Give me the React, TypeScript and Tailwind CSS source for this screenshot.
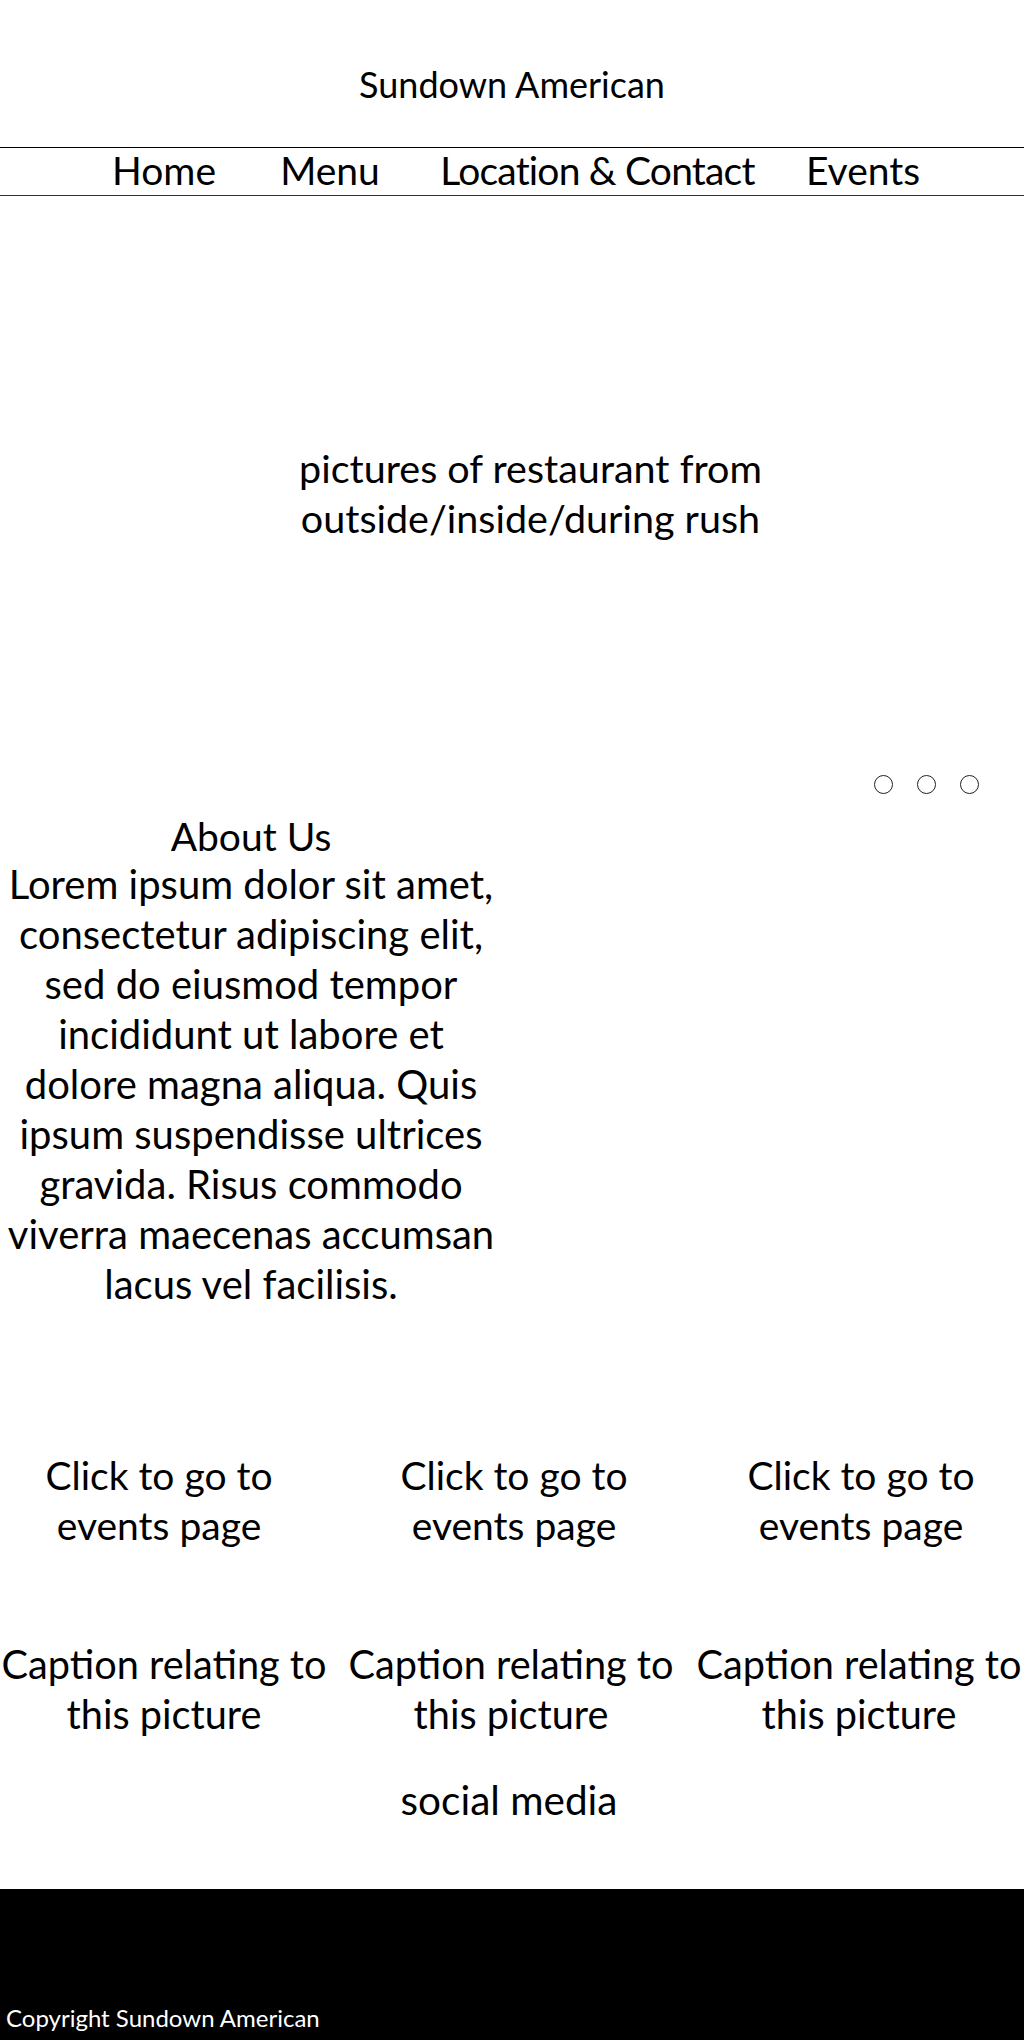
import React from "react";

const lorem = [
  "Lorem ipsum dolor sit amet,",
  "consectetur adipiscing elit,",
  "sed do eiusmod tempor",
  "incididunt ut labore et",
  "dolore magna aliqua. Quis",
  "ipsum suspendisse ultrices",
  "gravida. Risus commodo",
  "viverra maecenas accumsan",
  "lacus vel facilisis.",
];

export default function App() {
  return (
    <div className="w-[1024px] h-[2040px] bg-white text-black font-['Lato',sans-serif] flex flex-col">
      {/* Header */}
      <header className="pt-[59px]">
        <h1 className="text-center text-[36px] leading-[50px] font-normal whitespace-nowrap">
          Sundown American
        </h1>
      </header>

      {/* Nav */}
      <nav className="mt-[38px] border-t border-black border-b border-b-[#333] h-[49px]">
        <ul className="flex pl-[100px] text-[39px] leading-[44px] whitespace-nowrap">
          <li className="w-[128px] text-center">Home</li>
          <li className="w-[204px] text-center">Menu</li>
          <li className="w-[331px] text-center tracking-[-0.8px]">Location &amp; Contact</li>
          <li className="w-[200px] text-center">Events</li>
        </ul>
      </nav>

      {/* Hero */}
      <section className="pt-[247px] pl-[37px] text-center text-[39.5px] leading-[50px] whitespace-nowrap">
        <p>pictures of restaurant from</p>
        <p>outside/inside/during rush</p>
      </section>

      <div className="mt-[232px] flex justify-end gap-[24px] pr-[45px]">
        <span className="w-[19px] h-[19px] rounded-full border-[1.5px] border-[#222]" />
        <span className="w-[19px] h-[19px] rounded-full border-[1.5px] border-[#222]" />
        <span className="w-[19px] h-[19px] rounded-full border-[1.5px] border-[#222]" />
      </div>

      {/* About */}
      <section className="mt-[19px] w-[502px] text-center whitespace-nowrap">
        <h2 className="text-[39px] leading-[46px] font-normal">About Us</h2>
        <div className="text-[40px] leading-[50px]">
          {lorem.map((l) => (
            <p key={l}>{l}</p>
          ))}
        </div>
      </section>

      {/* Event links */}
      <section className="mt-[141px] grid grid-cols-[318px_392px_302px] text-center text-[39px] leading-[50px] whitespace-nowrap">
        {[0, 1, 2].map((i) => (
          <p key={i}>
            Click to go to
            <br />
            events page
          </p>
        ))}
      </section>

      {/* Captions */}
      <section className="mt-[89px] grid grid-cols-[328px_366px_330px] text-center text-[39.7px] leading-[50px] whitespace-nowrap">
        {[0, 1, 2].map((i) => (
          <p key={i}>
            Caption relating to
            <br />
            this picture
          </p>
        ))}
      </section>

      <p className="mt-[36px] pr-[6px] text-center text-[40.5px] leading-[50px]">social media</p>

      {/* Footer */}
      <footer className="mt-auto h-[151px] bg-black text-white pt-[114px] pl-[6px]">
        <p className="text-[24px] leading-[30px] whitespace-nowrap">Copyright Sundown American</p>
      </footer>
    </div>
  );
}
